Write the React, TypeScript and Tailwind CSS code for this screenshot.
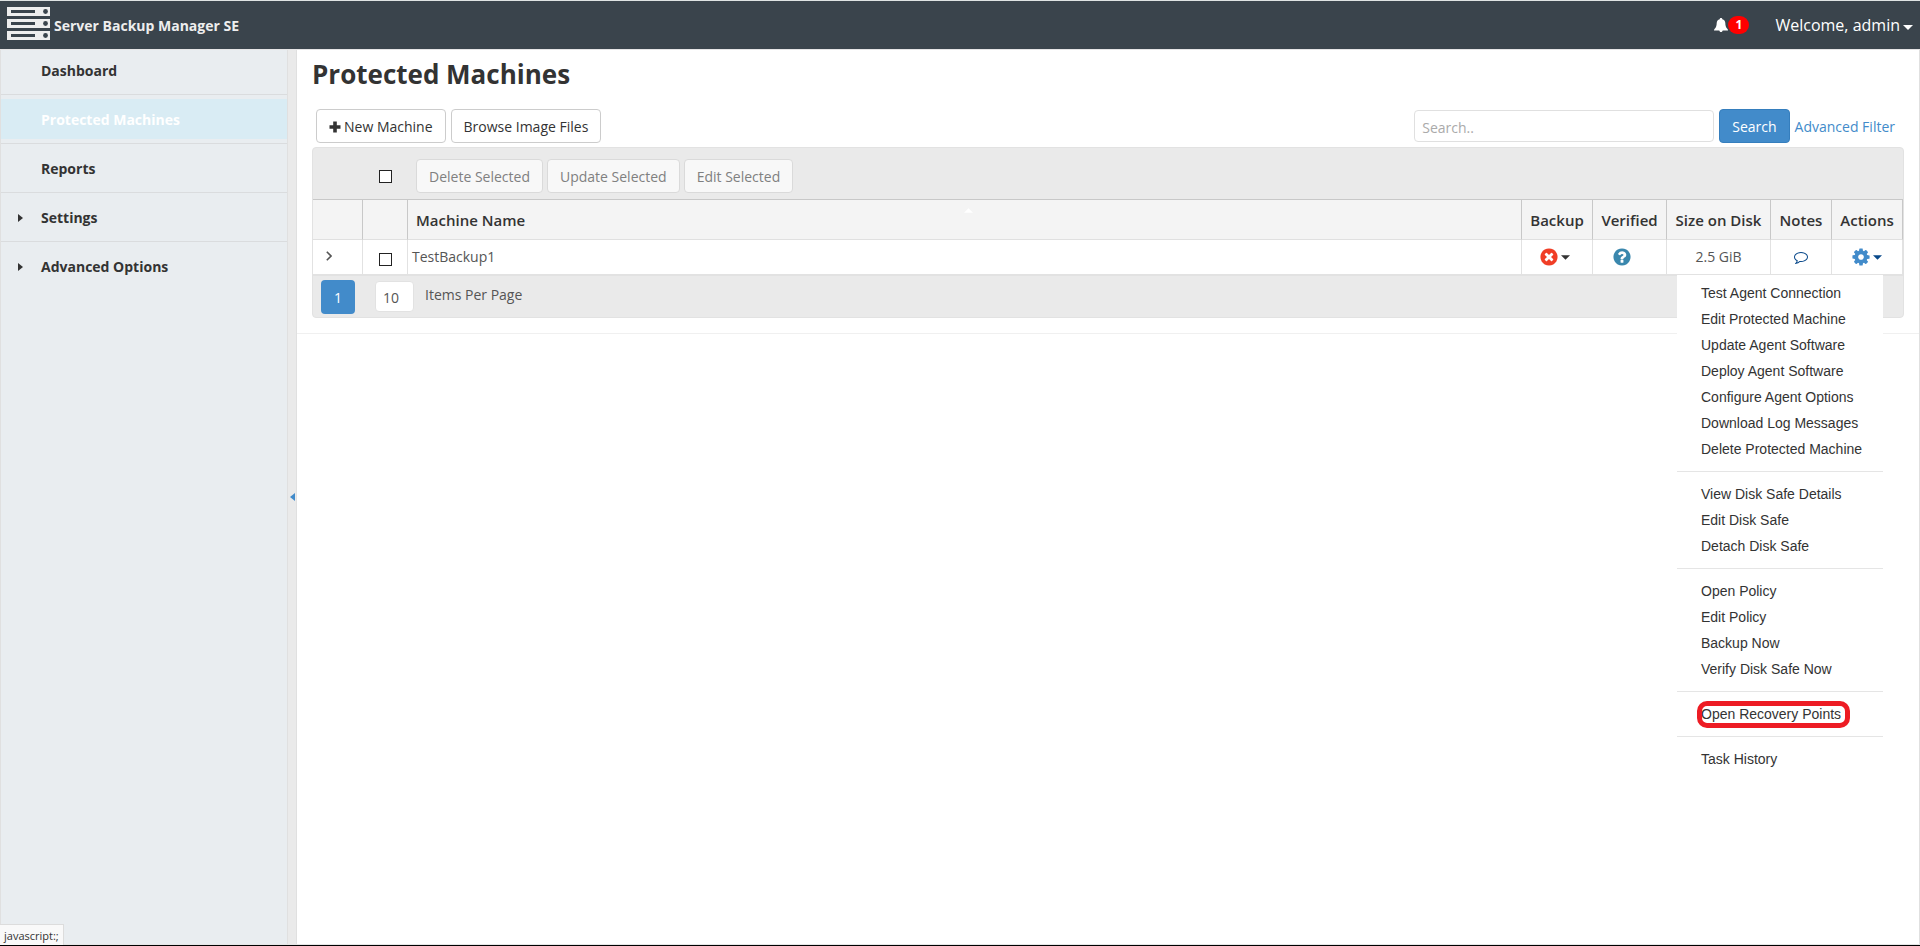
import { useState } from 'react'
import type { ReactNode } from 'react'

const navItems = [
  { label: 'Dashboard' },
  { label: 'Protected Machines', active: true },
  { label: 'Reports' },
  { label: 'Settings', expandable: true },
  { label: 'Advanced Options', expandable: true },
]

const actionGroups = [
  [
    'Test Agent Connection',
    'Edit Protected Machine',
    'Update Agent Software',
    'Deploy Agent Software',
    'Configure Agent Options',
    'Download Log Messages',
    'Delete Protected Machine',
  ],
  ['View Disk Safe Details', 'Edit Disk Safe', 'Detach Disk Safe'],
  ['Open Policy', 'Edit Policy', 'Backup Now', 'Verify Disk Safe Now'],
  ['Open Recovery Points'],
  ['Task History'],
]

const circle =
  'M1664 896q0 209-103 385.5t-279.5 279.5-385.5 103-385.5-103-279.5-279.5-103-385.5 103-385.5 279.5-279.5 385.5-103 385.5 103 279.5 279.5 103 385.5z'

function Logo() {
  return (
    <svg viewBox="0 0 43 33" className="w-[43px] h-[33px]" aria-hidden="true">
      {[0, 12, 24].map((y) => (
        <g key={y}>
          <rect x="0" y={y} width="43" height="9" fill="#eeeeee" />
          <rect x="4" y={y + 3} width="24" height="3" fill="#3a444c" />
          <circle cx="38.5" cy={y + 4.5} r="2.4" fill="#3a444c" />
        </g>
      ))}
    </svg>
  )
}

function BellIcon() {
  return (
    <svg viewBox="0 0 14 14" className="w-3.5 h-3.5" fill="currentColor" aria-hidden="true">
      <path d="M7 0c.8 0 1.3.5 1.3 1.2 1.900.5 2.900 1.900 3 3.800.1 2.600.4 4.300 2.200 6.100.4.4.5.8.5 1.400H0c0-.6.1-1 .5-1.400 1.800-1.800 2.100-3.500 2.200-6.100.1-1.900 1.100-3.300 3-3.800C5.700.5 6.200 0 7 0zM5.300 12.500h3.400c-.1.900-.8 1.500-1.700 1.500s-1.600-.6-1.700-1.500z" />
    </svg>
  )
}

function Caret({ className }: { className: string }) {
  return (
    <svg viewBox="0 0 10 5" className={className} fill="currentColor" aria-hidden="true">
      <path d="M0 0h10L5 5z" />
    </svg>
  )
}

function FailedIcon() {
  return (
    <svg viewBox="0 0 1792 1792" className="w-5 h-5" aria-hidden="true">
      <path d={circle} fill="#f03e26" />
      <path
        fill="#fff"
        d="M1277 1122q0-26-19-45l-181-181 181-181q19-19 19-45 0-27-19-46l-90-90q-19-19-46-19-26 0-45 19l-181 181-181-181q-19-19-45-19-27 0-46 19l-90 90q-19 19-19 46 0 26 19 45l181 181-181 181q-19 19-19 45 0 27 19 46l90 90q19 19 46 19 26 0 45-19l181-181 181 181q19 19 45 19 27 0 46-19l90-90q19-19 19-46z"
      />
    </svg>
  )
}

function UnknownIcon() {
  return (
    <svg viewBox="0 0 1792 1792" className="w-5 h-5" aria-hidden="true">
      <path d={circle} fill="#3a87ad" />
      <path
        fill="#fff"
        d="M1024 1376v-192q0-14-9-23t-23-9h-192q-14 0-23 9t-9 23v192q0 14 9 23t23 9h192q14 0 23-9t9-23zm256-672q0-88-55.5-163t-138.5-116-170-41q-243 0-371 213-15 24 8 42l132 100q7 6 19 6 16 0 25-12 53-68 86-92 34-24 86-24 48 0 85.500 26t37.500 59q0 38-20 61t-68 45q-63 28-115.500 86.500t-52.500 125.500v36q0 14 9 23t23 9h192q14 0 23-9t9-23q0-19 21.500-49.500t54.500-49.500q32-18 49-28.500t46-35 44.500-48 28-60.500 12.500-81z"
      />
    </svg>
  )
}

function CommentIcon() {
  return (
    <svg viewBox="0 0 1792 1792" className="w-3.5 h-3.5" fill="currentColor" aria-hidden="true">
      <path d="M896 384q-204 0-381.500 69.500t-282 187.500-104.500 255q0 112 71.500 213.500t201.500 175.500l87 50-27 96q-24 91-70 172 152-63 275-171l43-38 57 6q69 8 130 8 204 0 381.500-69.500t282-187.500 104.500-255-104.500-255-282-187.500-381.500-69.500zm896 512q0 174-120 321.500t-326 233-450 85.500q-70 0-145-8-198 175-460 242-49 14-114 22h-5q-15 0-27-10.500t-16-27.500v-1q-3-4-.5-12t2-10 4.500-9.500l6-9 7-8.500 8-9q7-8 31-34.500t34.500-38 31-39.500 32.500-51 27-59 26-76q-157-89-247.500-220t-90.500-281q0-174 120-321.500t326-233 450-85.500 450 85.500 326 233 120 321.500z" />
    </svg>
  )
}

function CogIcon() {
  return (
    <svg viewBox="0 0 1792 1792" className="w-5 h-5" fill="currentColor" aria-hidden="true">
      <path d="M1152 896q0-106-75-181t-181-75-181 75-75 181 75 181 181 75 181-75 75-181zm512-109v222q0 12-8 23t-20 13l-185 28q-19 54-39 91 35 50 107 138 10 12 10 25t-9 23q-27 37-99 108t-94 71q-12 0-26-9l-138-108q-44 23-91 38-16 136-29 186-7 28-36 28h-222q-14 0-24.500-8.500t-11.500-21.500l-28-184q-49-16-90-37l-141 107q-10 9-25 9-14 0-25-11-126-114-165-168-7-10-7-23 0-12 8-23 15-21 51-66.500t54-70.500q-27-50-41-99l-183-27q-13-2-21-12.500t-8-23.500v-222q0-12 8-23t19-13l186-28q14-46 39-92-40-57-107-138-10-12-10-24 0-10 9-23 26-36 98.500-107.500t94.500-71.500q13 0 26 10l138 107q44-23 91-38 16-136 29-186 7-28 36-28h222q14 0 24.500 8.500t11.500 21.500l28 184q49 16 90 37l142-107q9-9 24-9 13 0 25 10 129 119 165 170 7 8 7 22 0 12-8 23-15 21-51 66.500t-54 70.500q26 50 41 98l183 28q13 2 21 12.500t8 23.500z" />
    </svg>
  )
}

function Checkbox({ label }: { label: string }) {
  return (
    <input
      type="checkbox"
      aria-label={label}
      className="block w-[13px] h-[13px] appearance-none border border-[#222] bg-white checked:bg-[#428bca]"
    />
  )
}

function Button({ children, disabled }: { children: ReactNode; disabled?: boolean }) {
  return (
    <button
      disabled={disabled}
      className="flex items-center gap-[3px] h-[34px] px-3 pt-0.5 rounded border border-[#ccc] bg-white text-sm text-[#333] disabled:border-[#dadada] disabled:bg-[#f8f8f8] disabled:text-[#808080]"
    >
      {children}
    </button>
  )
}

function HeadCell({ children }: { children?: ReactNode }) {
  return (
    <th className="h-[41px] border-t border-r border-b border-t-[#c8c8c8] border-r-[#c8c8c8] border-b-[#e0e0e0] bg-[#f4f4f4] p-0 pt-0.5 text-[15px] font-semibold text-[#333]">
      {children}
    </th>
  )
}

function Header() {
  return (
    <header className="flex items-center justify-between h-[49px] shrink-0 border-t border-[#dfe3e3] bg-[#3a444c] px-[7px]">
      <div className="flex items-center gap-1 mb-[3px]">
        <Logo />
        <span className="pt-1 text-sm font-bold text-[#eee]">Server Backup Manager SE</span>
      </div>
      <div className="flex items-center gap-[26px] text-white">
        <button className="flex items-center" aria-label="Notifications">
          <BellIcon />
          <span className="w-[21px] h-[18px] rounded-full bg-[#f00] text-xs leading-[18px] font-bold">1</span>
        </button>
        <button className="flex items-center gap-[3px] text-base">
          Welcome, admin
          <Caret className="w-2.5 h-[5px] mt-1" />
        </button>
      </div>
    </header>
  )
}

function Sidebar() {
  return (
    <nav className="w-[287px] shrink-0 border-l border-[#e0e0e0] bg-[#e9edf0]">
      {navItems.map((item) => (
        <div
          key={item.label}
          className="h-[49px] border-b border-[#dadcde] py-1 first:h-[45px] first:pt-0 last:border-b-0"
        >
          <a
            href="#"
            className={`flex items-center h-10 pt-0.5 pl-[15px] text-sm font-bold ${
              item.active ? 'bg-[#d9ecf4] text-white' : 'text-[#333]'
            }`}
          >
            <span className="w-[25px]">
              {item.expandable && (
                <svg viewBox="0 0 5 8" className="w-[5px] h-2 ml-0.5" fill="currentColor" aria-hidden="true">
                  <path d="M0 0l5 4-5 4z" />
                </svg>
              )}
            </span>
            {item.label}
          </a>
        </div>
      ))}
    </nav>
  )
}

function ActionsMenu() {
  return (
    <div className="absolute top-[35px] right-[19px] z-10 w-[206px] rounded-b-sm bg-white py-[5px] font-['Liberation_Sans',sans-serif] whitespace-nowrap">
      {actionGroups.map((group, i) => (
        <ul key={group[0]} className={i > 0 ? 'mt-[9px] border-t border-[#e5e5e5] pt-[9px]' : ''}>
          {group.map((action) => (
            <li key={action} className="relative">
              <a href="#" className="block px-6 text-sm leading-[26px] text-[#333]">
                {action}
              </a>
              {action === 'Open Recovery Points' && (
                <span className="pointer-events-none absolute top-0 left-5 w-[153px] h-[27px] rounded-[10px] border-[5px] border-[#ed1c24]" />
              )}
            </li>
          ))}
        </ul>
      ))}
    </div>
  )
}

function MachineTable({ menuOpen, onToggleMenu }: { menuOpen: boolean; onToggleMenu: () => void }) {
  const cell = 'h-9 border-r border-b-2 border-[#e2e2e2] p-0'
  return (
    <table className="w-full table-fixed border-separate border-spacing-0 text-sm text-[#555]">
      <colgroup>
        <col className="w-[50px]" />
        <col className="w-[45px]" />
        <col />
        <col className="w-[71px]" />
        <col className="w-[74px]" />
        <col className="w-[104px]" />
        <col className="w-[61px]" />
        <col className="w-[71px]" />
      </colgroup>
      <thead>
        <tr>
          <HeadCell />
          <HeadCell />
          <HeadCell>
            <div className="flex items-center">
              <span className="flex-1 pl-2 text-left">Machine Name</span>
              <Caret className="mb-5 w-[9px] h-[5px] rotate-180 text-white" />
              <span className="flex-1" />
            </div>
          </HeadCell>
          <HeadCell>Backup</HeadCell>
          <HeadCell>Verified</HeadCell>
          <HeadCell>Size on Disk</HeadCell>
          <HeadCell>Notes</HeadCell>
          <HeadCell>Actions</HeadCell>
        </tr>
      </thead>
      <tbody className="bg-white">
        <tr>
          <td className={cell}>
            <button className="ml-[13px] block" aria-label="Expand row">
              <svg viewBox="0 0 6 10" className="w-1.5 h-2.5 mb-0.5" fill="none" stroke="currentColor" strokeWidth="1.6" aria-hidden="true">
                <path d="M.8.8L5 5 .8 9.200" />
              </svg>
            </button>
          </td>
          <td className={cell}>
            <div className="flex justify-center pt-1">
              <Checkbox label="Select TestBackup1" />
            </div>
          </td>
          <td className={cell}>
            <span className="pl-1">TestBackup1</span>
          </td>
          <td className={cell}>
            <button
              className="flex w-full items-center justify-center gap-0.5 pr-1.5 text-[#333]"
              aria-label="Backup status"
            >
              <FailedIcon />
              <Caret className="w-[9px] h-[5px]" />
            </button>
          </td>
          <td className={cell}>
            <span className="flex justify-center pr-4">
              <UnknownIcon />
            </span>
          </td>
          <td className={`${cell} text-center`}>2.5 GiB</td>
          <td className={cell}>
            <button className="flex w-full justify-center text-[#08488a]" aria-label="Notes">
              <CommentIcon />
            </button>
          </td>
          <td className={`${cell} relative`}>
            <button
              className="flex w-full items-center justify-center gap-0.5 pr-0.5 text-[#428bca]"
              aria-label="Actions"
              aria-expanded={menuOpen}
              onClick={onToggleMenu}
            >
              <CogIcon />
              <Caret className="w-[9px] h-[5px] text-[#08488a]" />
            </button>
            {menuOpen && <ActionsMenu />}
          </td>
        </tr>
      </tbody>
    </table>
  )
}

export default function App() {
  const [menuOpen, setMenuOpen] = useState(true)

  return (
    <div className="flex min-h-screen flex-col border-b border-black bg-white font-['Open_Sans',sans-serif] text-[#333]">
      <Header />
      <div className="flex flex-1 border-y border-[#e5e5e5]">
        <Sidebar />
        <div className="flex w-2.5 shrink-0 items-center border-x border-[#e0e0e0] bg-[#eaeaea]">
          <button className="ml-0.5 text-[#428bca]" aria-label="Collapse sidebar">
            <svg viewBox="0 0 5 8" className="w-[5px] h-2" fill="currentColor" aria-hidden="true">
              <path d="M5 0v8L0 4z" />
            </svg>
          </button>
        </div>

        <main className="min-w-0 flex-1 border-r border-[#e0e0e0]">
          <div className="border-b border-[#f0f0f0] px-[15px] pt-1.5 pb-[15px]">
            <h1 className="text-[26px] leading-9 font-bold">Protected Machines</h1>

            <div className="flex items-center justify-between pt-[17px] pr-[9px] pb-1 pl-1">
              <div className="flex gap-[5px]">
                <Button>
                  <svg viewBox="0 0 12 12" className="w-3 h-3" fill="currentColor" aria-hidden="true">
                    <path d="M4.200.5h3.600v3.700h3.700v3.600H7.800v3.700H4.200V7.800H.5V4.200h3.700z" />
                  </svg>
                  New Machine
                </Button>
                <Button>Browse Image Files</Button>
              </div>
              <form className="flex items-center gap-[5px] text-sm" onSubmit={(e) => e.preventDefault()}>
                <input
                  type="text"
                  aria-label="Search"
                  placeholder="Search.."
                  className="w-[300px] h-8 rounded border border-[#e0e0e0] px-[7px] pt-0.5 placeholder:text-[#aaa]"
                />
                <button className="h-[34px] rounded border border-[#357ebd] bg-[#428bca] px-3 pt-0.5 text-white">
                  Search
                </button>
                <a href="#" className="pt-0.5 text-[#428bca]">
                  Advanced Filter
                </a>
              </form>
            </div>

            <div className="rounded border border-[#e2e2e2] bg-[#eaeaea]">
              <div className="flex items-center h-[51px] gap-1 pt-[5px] pl-[66px]">
                <div className="w-[33px]">
                  <Checkbox label="Select all machines" />
                </div>
                <Button disabled>Delete Selected</Button>
                <Button disabled>Update Selected</Button>
                <Button disabled>Edit Selected</Button>
              </div>

              <MachineTable menuOpen={menuOpen} onToggleMenu={() => setMenuOpen(!menuOpen)} />

              <div className="flex h-[41px] items-center pl-2 text-sm text-[#555]">
                <button className="h-[34px] w-[34px] rounded bg-[#428bca] pt-0.5 text-white">1</button>
                <input
                  id="page-size"
                  type="text"
                  defaultValue="10"
                  className="mr-[11px] ml-5 h-[31px] w-[39px] rounded border border-[#e2e2e2] bg-white px-[7px] pt-0.5"
                />
                <label htmlFor="page-size" className="pb-1">
                  Items Per Page
                </label>
              </div>
            </div>
          </div>
        </main>
      </div>

      <div className="fixed bottom-px left-0 border-t border-r border-[#dcdcdc] bg-[#f9f9f9] px-1 pt-0.5 text-[11px] leading-[18px]">
        javascript:;
      </div>
    </div>
  )
}
